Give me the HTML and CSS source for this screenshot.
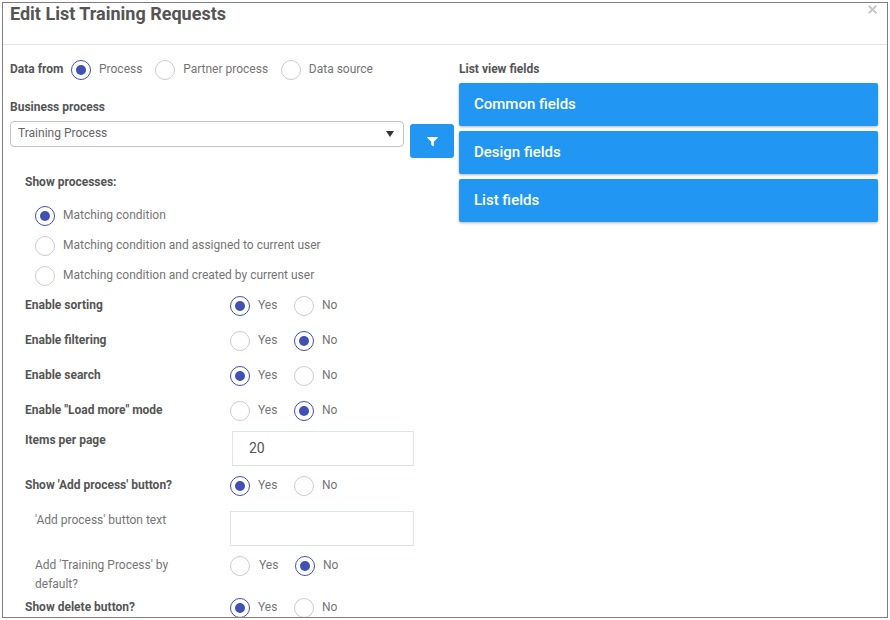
FILE: index.html
```html
<!DOCTYPE html>
<html lang="en">
<head>
<meta charset="utf-8">
<title>Edit List Training Requests</title>
<link rel="stylesheet" href="styles.css">
</head>
<body>
<div class="modal">
  <header class="modal-head">
    <h1 class="modal-title">Edit List Training Requests</h1>
    <svg class="modal-close" viewBox="0 0 9 9" width="9" height="9" aria-label="Close"><path d="M0.7 0.7L8.3 8.3M8.3 0.7L0.7 8.3" stroke="#c8c8c8" stroke-width="2" fill="none"/></svg>
  </header>
  <div class="modal-body">
    <section class="col-left">
      <div class="data-from">
        <span class="label">Data from</span>
        <span class="opt"><i class="radio on"></i><span class="opt-text">Process</span></span>
        <span class="opt"><i class="radio"></i><span class="opt-text">Partner process</span></span>
        <span class="opt"><i class="radio"></i><span class="opt-text">Data source</span></span>
      </div>
      <div class="label bp-label">Business process</div>
      <div class="bp-row">
        <div class="select"><span>Training Process</span><i class="caret"></i></div>
        <button class="filter-btn" type="button" aria-label="Filter">
          <svg viewBox="0 0 12 12" width="11" height="11"><path d="M0.6 1h10.8a.5.5 0 0 1 .4.85L7.4 6.4v4.3a.5.5 0 0 1-.8.4L4.9 9.8a.5.5 0 0 1-.3-.45V6.4L.2 1.85A.5.5 0 0 1 .6 1z" fill="#fff"/></svg>
        </button>
      </div>
      <div class="settings">
        <div class="label show-label">Show processes:</div>
        <div class="proc-list">
          <div class="proc"><i class="radio on"></i><span class="opt-text">Matching condition</span></div>
          <div class="proc"><i class="radio"></i><span class="opt-text">Matching condition and assigned to current user</span></div>
          <div class="proc"><i class="radio"></i><span class="opt-text">Matching condition and created by current user</span></div>
        </div>
        <div class="row"><span class="label">Enable sorting</span><div class="yn"><i class="radio on"></i><span class="yes">Yes</span><i class="radio"></i><span class="no">No</span></div></div>
        <div class="row"><span class="label">Enable filtering</span><div class="yn"><i class="radio"></i><span class="yes">Yes</span><i class="radio on"></i><span class="no">No</span></div></div>
        <div class="row"><span class="label">Enable search</span><div class="yn"><i class="radio on"></i><span class="yes">Yes</span><i class="radio"></i><span class="no">No</span></div></div>
        <div class="row"><span class="label">Enable "Load more" mode</span><div class="yn"><i class="radio"></i><span class="yes">Yes</span><i class="radio on"></i><span class="no">No</span></div></div>
        <div class="row row-items"><span class="label">Items per page</span><div class="input input-items">20</div></div>
        <div class="row"><span class="label">Show 'Add process' button?</span><div class="yn"><i class="radio on"></i><span class="yes">Yes</span><i class="radio"></i><span class="no">No</span></div></div>
        <div class="row row-text"><span class="sub-label">'Add process' button text</span><div class="input"></div></div>
        <div class="row row-default"><span class="sub-label">Add 'Training Process' by default?</span><div class="yn"><i class="radio"></i><span class="yes">Yes</span><i class="radio on"></i><span class="no">No</span></div></div>
        <div class="row"><span class="label">Show delete button?</span><div class="yn"><i class="radio on"></i><span class="yes">Yes</span><i class="radio"></i><span class="no">No</span></div></div>
      </div>
    </section>
    <section class="col-right">
      <div class="label fields-label">List view fields</div>
      <div class="panel">Common fields</div>
      <div class="panel">Design fields</div>
      <div class="panel">List fields</div>
    </section>
  </div>
</div>
</body>
</html>
```
FILE: styles.css
```css
html, body { margin: 0; padding: 0; background: #fff; }
body { width: 890px; height: 620px; overflow: hidden; font-family: Roboto, "Liberation Sans", sans-serif; font-size: 12px; color: #757575; }
* { box-sizing: border-box; }
.modal { margin: 2px 2px 0 2px; width: 886px; height: 616px; border: 1px solid #7f7f7f; overflow: hidden; background: #fff; }
.modal-head { height: 42px; border-bottom: 1px solid #e2e2e2; display: flex; justify-content: space-between; align-items: flex-start; padding: 0 10px 0 7px; }
.modal-title { margin: 0; font-size: 18px; line-height: 22px; font-weight: 700; color: #555; }
.modal-close { flex: none; margin-top: 2px; }
.modal-body { display: flex; padding: 0 9px 0 7px; }
.col-left { width: 444px; flex: none; }
.col-right { margin-left: 5px; flex: 1; }
.label { font-weight: 700; color: #555; font-size: 12px; line-height: 16px; }
.radio { display: block; flex: none; width: 20px; height: 20px; border-radius: 50%; border: 1px solid #ccc; background: #fff; position: relative; }
.radio.on { border: 1.5px solid #3f51b5; }
.radio.on::after { content: ""; position: absolute; left: 3.5px; top: 3.5px; width: 10px; height: 10px; border-radius: 50%; background: #3f51b5; }
.opt-text, .yes, .no { line-height: 16px; color: #757575; }
.data-from { display: flex; align-items: center; height: 20px; margin-top: 15px; }
.data-from .opt { display: flex; align-items: center; }
.data-from .label { width: 61px; margin-top: -2px; }
.data-from .opt-text { margin: -2px 0 0 8px; }
.data-from .opt + .opt { margin-left: 12.75px; }
.bp-label { margin-top: 19px; }
.bp-row { display: flex; align-items: flex-start; margin-top: 6px; }
.select { width: 394px; height: 26px; border: 1px solid #c4c4c4; border-radius: 4px; display: flex; align-items: center; justify-content: space-between; padding: 0 9px 2px 7px; color: #666; }
.caret { width: 0; height: 0; border-left: 4px solid transparent; border-right: 4px solid transparent; border-top: 6px solid #333; margin-top: 2px; }
.filter-btn { width: 44px; height: 34px; margin: 3px 0 0 6px; padding: 0; border: 0; border-radius: 3px; background: #2196f3; display: flex; align-items: center; justify-content: center; }
.settings { padding-left: 15px; }
.show-label { margin-top: 16px; }
.proc-list { margin: 11px 0 -3px; padding-left: 10px; }
.proc { display: flex; align-items: center; height: 30px; gap: 8px; }
.proc .opt-text { margin-top: -2px; }
.row { display: grid; grid-template-columns: 205px 1fr; align-items: start; height: 35px; padding-top: 8px; }
.row .label { margin-top: 1px; }
.yn { display: flex; align-items: center; }
.yes { margin-left: 8px; width: 36px; margin-top: -2px; }
.no { margin-left: 8px; margin-top: -2px; }
.input { width: 184px; height: 35px; border: 1px solid #dde5e5; background: #fff; }
.input-items { width: 182px; margin-left: 2px; padding-left: 16px; font-size: 14px; line-height: 33px; color: #555; }
.row-items { height: 40px; padding-top: 3px; }
.row-text { height: 50px; }
.sub-label { padding-left: 10px; line-height: 19px; color: #757575; }
.row-default { height: 37px; padding-top: 3px; }
.row-default .sub-label { width: 160px; }
.row-default .yes { margin-left: 9px; }
.fields-label { margin-top: 16px; }
.panel { height: 43px; margin-top: 5px; padding-left: 15px; background: #2196f3; color: #fff; font-size: 15px; font-weight: 500; line-height: 42px; border-radius: 2px; box-shadow: 0 1px 3px rgba(0,0,0,.3); }
.fields-label + .panel { margin-top: 6px; }
```
